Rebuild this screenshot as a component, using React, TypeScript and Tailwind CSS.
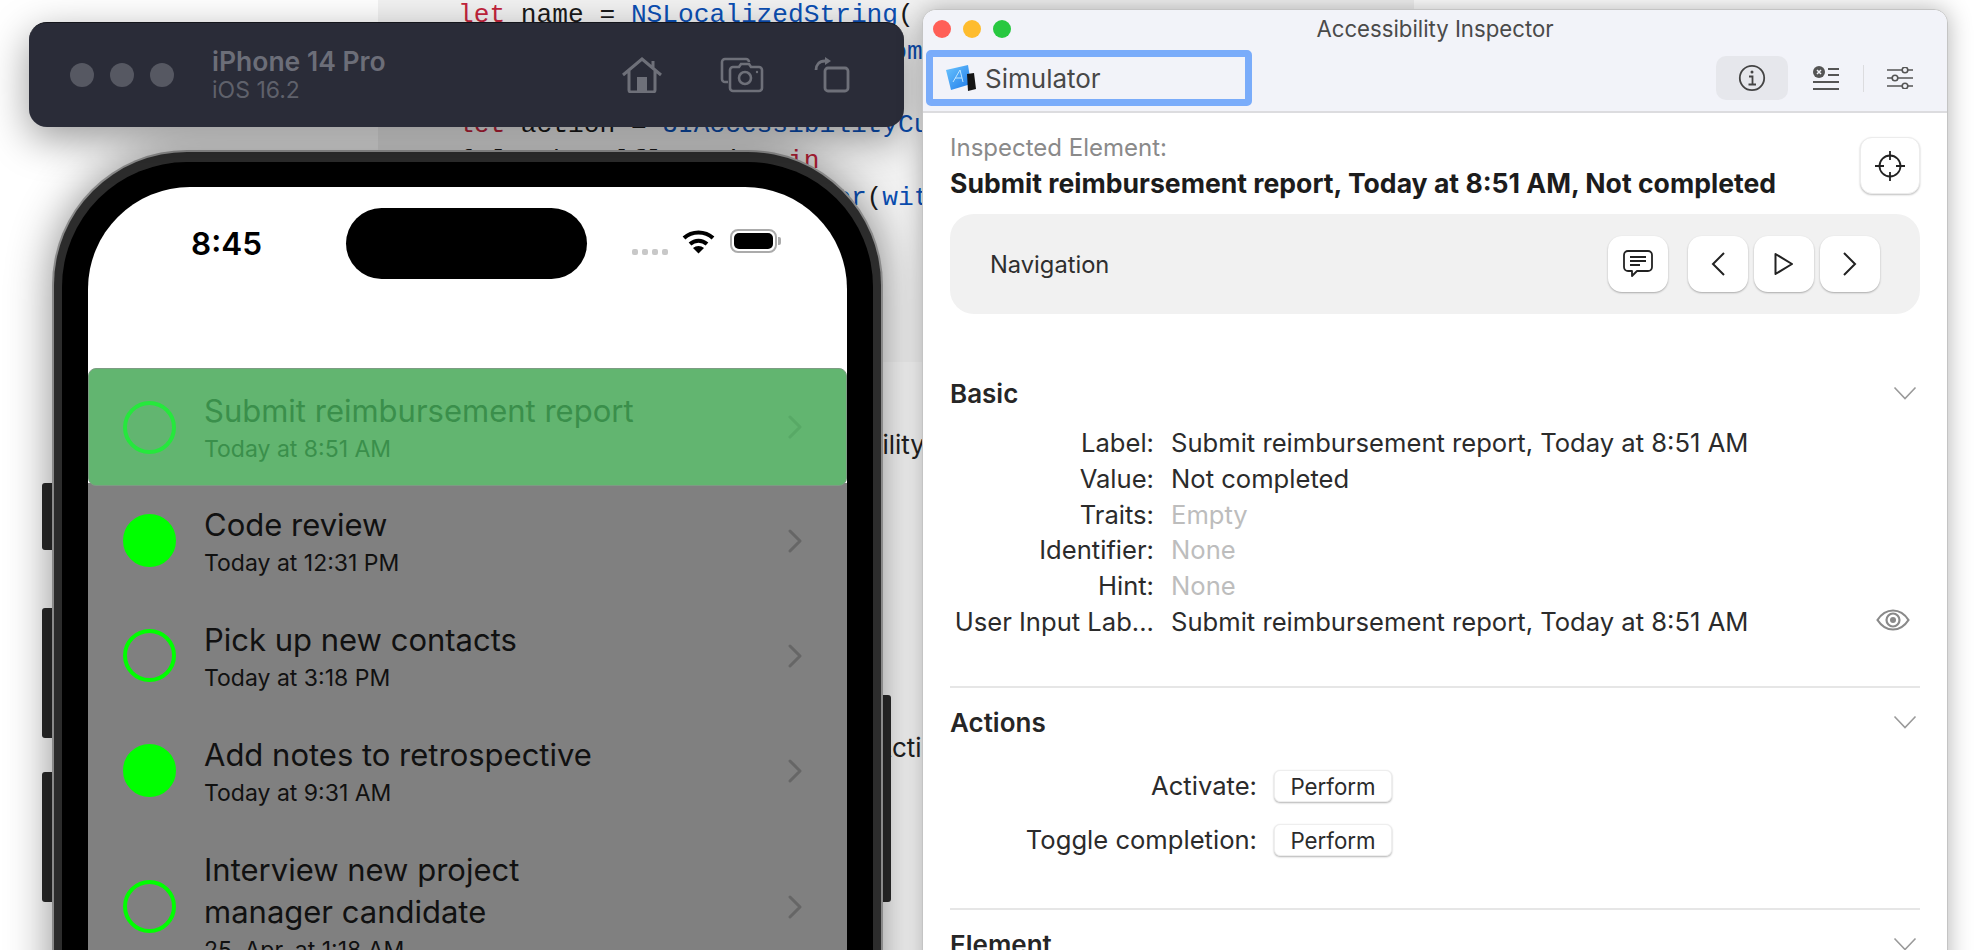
import React from "react";

const reminders = [
  { title: ["Code review"], when: "Today at 12:31 PM", done: true },
  { title: ["Pick up new contacts"], when: "Today at 3:18 PM", done: false },
  { title: ["Add notes to retrospective"], when: "Today at 9:31 AM", done: true },
  { title: ["Interview new project", "manager candidate"], when: "25. Apr. at 1:18 AM", done: false },
];

const basicRows = [
  { label: "Label:", value: "Submit reimbursement report, Today at 8:51 AM" },
  { label: "Value:", value: "Not completed" },
  { label: "Traits:", value: "Empty", muted: true },
  { label: "Identifier:", value: "None", muted: true },
  { label: "Hint:", value: "None", muted: true },
  { label: "User Input Lab...", value: "Submit reimbursement report, Today at 8:51 AM", eye: true },
];

const RowChevron = ({ className }: { className: string }) => (
  <svg width="16" height="24" viewBox="0 0 16 24" fill="none" className={className}>
    <path d="M3 2l10 10L3 22" stroke="currentColor" strokeWidth="3" strokeLinecap="round" strokeLinejoin="round" />
  </svg>
);

const SectionChevron = () => (
  <svg width="24" height="14" viewBox="0 0 24 14" fill="none" className="text-[#9a9a9a]">
    <path d="M1.5 1.5L12 12.5 22.5 1.5" stroke="currentColor" strokeWidth="1.6" />
  </svg>
);

const SectionHeader = ({ title }: { title: string }) => (
  <div className="flex h-[36px] items-center justify-between pr-[3px]">
    <span className="text-[26px] font-semibold text-[#262626]">{title}</span>
    <SectionChevron />
  </div>
);

const NavButton = ({ children }: { children: React.ReactNode }) => (
  <div className="flex h-[56px] w-[60px] items-center justify-center rounded-[14px] bg-white shadow-[0_1px_2px_rgba(0,0,0,0.3)]">
    {children}
  </div>
);

const SimulatorBar = () => (
  <div className="absolute left-[29px] top-[22px] z-20 flex h-[105px] w-[875px] items-center rounded-[18px] border-t border-[#15161c] bg-[#2a2c38] pl-[41px] shadow-[0_12px_40px_rgba(0,0,0,0.4)]">
    <div className="flex gap-[16px]">
      <div className="size-[24px] rounded-full bg-[#565862]" />
      <div className="size-[24px] rounded-full bg-[#565862]" />
      <div className="size-[24px] rounded-full bg-[#565862]" />
    </div>
    <div className="ml-[38px] flex w-[410px] flex-col">
      <span className="text-[26.5px] font-semibold leading-[30px] text-[#6c6e78]">iPhone 14 Pro</span>
      <span className="text-[23px] leading-[28px] text-[#5f616b]">iOS 16.2</span>
    </div>
    <div className="flex items-center text-[#6e7079]">
      <svg width="40" height="36" viewBox="0 0 40 36" fill="none" stroke="currentColor" strokeWidth="3">
        <path d="M1 18L20 2l19 16M31 4v7M7 14v19a2 2 0 0 0 2 2h22a2 2 0 0 0 2-2V14" />
        <rect x="15" y="20" width="10" height="15" fill="currentColor" stroke="none" />
      </svg>
      <svg width="44" height="36" viewBox="0 0 44 36" fill="none" stroke="currentColor" strokeWidth="2.6" className="ml-[58px]">
        <path d="M8 25H5a3 3 0 0 1-3-3V5a3 3 0 0 1 3-3h21a3 3 0 0 1 3 3" />
        <path d="M13 10h6l2-3h8l2 3h8a3 3 0 0 1 3 3v18a3 3 0 0 1-3 3H13a3 3 0 0 1-3-3V13a3 3 0 0 1 3-3z" />
        <circle cx="25" cy="21" r="6" />
        <circle cx="37" cy="15" r="1.2" fill="currentColor" stroke="none" />
      </svg>
      <svg width="36" height="36" viewBox="0 0 36 36" fill="none" stroke="currentColor" strokeWidth="2.8" className="ml-[50px]">
        <rect x="11" y="11" width="23" height="23" rx="3" />
        <path d="M2 13c0-5 3-9 9-9" />
        <path d="M11 0l6 4-6 4z" fill="currentColor" stroke="none" />
      </svg>
    </div>
  </div>
);

const StatusBar = () => (
  <div className="flex h-[92px] shrink-0 items-center pt-[21px]">
    <span className="ml-[103px] w-[155px] text-[31.5px] font-semibold leading-none text-black">8:45</span>
    <div className="h-[71px] w-[241px] rounded-[36px] bg-black" />
    <div className="ml-[45px] flex w-[151px] items-start">
      <div className="mt-[17px] flex gap-[4px]">
        <div className="size-[6px] rounded-[2px] bg-[#c8c8c8]" />
        <div className="size-[6px] rounded-[2px] bg-[#c8c8c8]" />
        <div className="size-[6px] rounded-[2px] bg-[#c8c8c8]" />
        <div className="size-[6px] rounded-[2px] bg-[#c8c8c8]" />
      </div>
      <svg width="33" height="24" viewBox="0 0 33 24" className="ml-[14px] -mt-[2px]" fill="none" stroke="black" strokeWidth="4">
        <path d="M2 8c8-7.5 21-7.5 29 0" />
        <path d="M8 14c5-4.500 12-4.500 17 0" />
        <path d="M16.500 23.500L11 18c3-2.800 8-2.800 11 0z" fill="black" stroke="none" />
      </svg>
      <div className="ml-[15px] -mt-[3px] flex items-center">
        <div className="h-[24px] w-[47px] rounded-[8px] border-2 border-[#ababab] p-[2px]">
          <div className="h-full w-full rounded-[5px] bg-black" />
        </div>
        <div className="ml-[1px] h-[8px] w-[3px] rounded-r-[2px] bg-[#ababab]" />
      </div>
    </div>
  </div>
);

const Phone = () => (
  <div className="absolute left-[42px] top-[150px] z-10 h-[900px] w-[849px]">
    {/* side buttons */}
    <div className="absolute left-0 top-[333px] h-[67px] w-[12px] rounded-l-[3px] bg-[#2a2a2a]" />
    <div className="absolute left-0 top-[458px] h-[130px] w-[12px] rounded-l-[3px] bg-[#2a2a2a]" />
    <div className="absolute left-0 top-[622px] h-[130px] w-[12px] rounded-l-[3px] bg-[#2a2a2a]" />
    <div className="absolute right-0 top-[545px] h-[207px] w-[12px] rounded-r-[3px] bg-[#2a2a2a]" />
    <div className="absolute left-[10px] top-0 h-[900px] w-[831px] rounded-t-[135px] border-2 border-b-0 border-[#8a8a8a] bg-[#2c2c2c] px-[8px] pt-[10px] shadow-[0_0_45px_rgba(0,0,0,0.45)]">
      <div className="h-full rounded-t-[125px] bg-black px-[26px] pt-[25px]">
        <div className="flex h-full flex-col overflow-hidden rounded-t-[102px] bg-white">
          <StatusBar />
          <div className="h-[89px] shrink-0" />
          <div className="relative z-10 -mb-[3px] flex h-[118px] shrink-0 items-center rounded-[8px] border border-[#7d9c83] bg-[#62b570] pl-[34px] pr-[43px] text-[#3a8f4b]">
            <div className="size-[53px] shrink-0 rounded-full border-[4px] border-[#25e83c]" />
            <div className="ml-[28px] -mt-[1px] flex-1">
              <div className="text-[31px] leading-[42px]">Submit reimbursement report</div>
              <div className="mt-[2px] text-[23px] leading-[30px]">Today at 8:51 AM</div>
            </div>
            <RowChevron className="text-[#58a966]" />
          </div>
          <div className="flex-1 bg-[#808080]">
            {reminders.map((r) => (
              <div
                key={r.when}
                className={`flex items-center pl-[35px] pr-[44px] text-[#111] ${r.title.length > 1 ? "h-[157px]" : "h-[115px]"}`}
              >
                <div className={`size-[53px] shrink-0 rounded-full border-[4px] border-[#00ff00] ${r.done ? "bg-[#00ff00]" : ""}`} />
                <div className="ml-[28px] flex-1">
                  {r.title.map((line) => (
                    <div key={line} className="text-[31px] leading-[42px]">{line}</div>
                  ))}
                  <div className="mt-[2px] text-[23px] leading-[30px]">{r.when}</div>
                </div>
                <RowChevron className="text-[#666666]" />
              </div>
            ))}
          </div>
        </div>
      </div>
    </div>
  </div>
);

const Inspector = () => (
  <div className="absolute left-[922px] top-[9px] z-30 h-[1000px] w-[1026px] overflow-hidden rounded-t-[14px] border border-[#c4c4c4] bg-white shadow-[0_0_24px_rgba(0,0,0,0.3)]">
    <div className="h-[103px] border-b-2 border-[#dcdcdf] bg-[#f2f3f9]">
      <div className="relative flex h-[38px] items-center justify-center">
        <div className="absolute left-[10px] top-[10px] flex gap-[12px]">
          <div className="size-[18px] rounded-full bg-[#ff5f57]" />
          <div className="size-[18px] rounded-full bg-[#febc2e]" />
          <div className="size-[18px] rounded-full bg-[#28c840]" />
        </div>
        <span className="text-[22.2px] text-[#4a4a4a]">Accessibility Inspector</span>
      </div>
      <div className="mt-[2px] flex items-center justify-between pl-[3px] pr-[34px]">
        <div className="flex h-[56px] w-[326px] items-center rounded-[5px] border-[7px] border-[#7aacfa] pl-[12px] text-[26px] text-[#484848]">
          <svg width="32" height="28" viewBox="0 0 32 28" className="shrink-0">
            <defs>
              <linearGradient id="sim" x1="0" y1="0" x2="1" y2="1">
                <stop offset="0" stopColor="#6cc6ff" />
                <stop offset="1" stopColor="#1c78e8" />
              </linearGradient>
            </defs>
            <path d="M1 6L23 1l3 19-20 6z" fill="url(#sim)" />
            <path d="M8 18L15 6l3 12M10 14h7" stroke="#bfe6ff" strokeWidth="1" fill="none" />
            <path d="M22 10l7-1 2 16-8 2z" fill="#151515" />
          </svg>
          <span className="ml-[8px]">Simulator</span>
        </div>
        <div className="flex items-center">
          <div className="flex h-[44px] w-[72px] items-center justify-center rounded-[10px] bg-[#e6e7ec]">
            <svg width="28" height="28" viewBox="0 0 28 28" fill="none" stroke="#444" strokeWidth="1.8">
              <circle cx="14" cy="14" r="12.200" />
              <path d="M11 12.500h3.500V20M10.500 20.500h7.500" />
              <circle cx="14" cy="8" r="1.500" fill="#444" stroke="none" />
            </svg>
          </div>
          <svg width="26" height="24" viewBox="0 0 26 24" fill="none" stroke="#555" strokeWidth="1.800" className="ml-[25px]">
            <circle cx="6" cy="6" r="6" fill="#555" stroke="none" />
            <path d="M4 4l4 4M8 4l-4 4" stroke="#f2f3f9" strokeWidth="1.500" />
            <path d="M15 3h11M15 9h11M0 16h26M0 23h26" />
          </svg>
          <div className="ml-[24px] h-[27px] w-px bg-[#dcdcdf]" />
          <svg width="26" height="22" viewBox="0 0 26 22" fill="none" stroke="#555" strokeWidth="1.600" className="ml-[23px]">
            <path d="M0 3h15M21 3h5M0 11h5M11 11h15M0 19h15M21 19h5" />
            <circle cx="18" cy="3" r="2.800" />
            <circle cx="8" cy="11" r="2.800" />
            <circle cx="18" cy="19" r="2.800" />
          </svg>
        </div>
      </div>
    </div>

    <div className="px-[27px] pt-[24px]">
      <div className="flex h-[77px] items-start justify-between">
        <div className="-mt-[4px]">
          <div className="text-[24px] leading-[30px] text-[#8a8a8a]">Inspected Element:</div>
          <div className="mt-[2px] text-[26.6px] font-bold leading-[36px] text-[#1c1c1c]">
            Submit reimbursement report, Today at 8:51 AM, Not completed
          </div>
        </div>
        <div className="flex h-[57px] w-[60px] items-center justify-center rounded-[12px] border border-[#ececec] bg-white shadow-[0_1px_2px_rgba(0,0,0,0.25)]">
          <svg width="32" height="32" viewBox="0 0 32 32" fill="none" stroke="#222" strokeWidth="1.800">
            <circle cx="16" cy="16" r="10.500" />
            <path d="M16 1v9M16 22v9M1 16h9M22 16h9" />
          </svg>
        </div>
      </div>

      <div className="flex h-[100px] items-center justify-between rounded-[24px] bg-[#f1f1f1] pl-[40px] pr-[40px]">
        <span className="pt-[2px] text-[23.7px] text-[#2e2e2e]">Navigation</span>
        <div className="flex items-center">
          <NavButton>
            <svg width="30" height="28" viewBox="0 0 30 28" fill="none" stroke="#222" strokeWidth="1.800" strokeLinejoin="round">
              <path d="M5 1h20a4 4 0 0 1 4 4v12a4 4 0 0 1-4 4H14l-5 5v-5H5a4 4 0 0 1-4-4V5a4 4 0 0 1 4-4z" />
              <path d="M7 7h16M7 11h16M7 15h10" />
            </svg>
          </NavButton>
          <div className="ml-[20px] flex gap-[6px]">
            <NavButton>
              <svg width="14" height="24" viewBox="0 0 14 24" fill="none" stroke="#222" strokeWidth="2"><path d="M13 1L2 12l11 11" /></svg>
            </NavButton>
            <NavButton>
              <svg width="20" height="24" viewBox="0 0 20 24" fill="none" stroke="#222" strokeWidth="2" strokeLinejoin="round"><path d="M1.500 2L18 12 1.500 22z" /></svg>
            </NavButton>
            <NavButton>
              <svg width="14" height="24" viewBox="0 0 14 24" fill="none" stroke="#222" strokeWidth="2"><path d="M1 1l11 11L1 23" /></svg>
            </NavButton>
          </div>
        </div>
      </div>

      <div className="mt-[61px]">
        <SectionHeader title="Basic" />
      </div>
      <div className="mt-[14px]">
        {basicRows.map((row) => (
          <div key={row.label} className="flex h-[35.9px] items-center text-[25.6px]">
            <span className="w-[204px] shrink-0 whitespace-nowrap text-right text-[#2b2b2b]">{row.label}</span>
            <span className={`ml-[17px] flex-1 ${row.muted ? "text-[#bdbdbd]" : "text-[#2b2b2b]"}`}>{row.value}</span>
            {row.eye && (
              <svg width="34" height="22" viewBox="0 0 34 22" fill="none" stroke="#8a8a8a" strokeWidth="2.200" className="mr-[10px] -mt-[4px]">
                <path d="M1.500 11C6 4 11 1.500 17 1.500S28 4 32.500 11C28 18 23 20.500 17 20.500S6 18 1.500 11z" />
                <circle cx="17" cy="11" r="6.500" />
                <circle cx="17" cy="11" r="3" fill="#8a8a8a" stroke="none" />
              </svg>
            )}
          </div>
        ))}
      </div>

      <div className="mt-[46px] h-[2px] bg-[#e6e6e6]" />
      <div className="mt-[16px]">
        <SectionHeader title="Actions" />
      </div>
      <div className="mt-[30px] flex flex-col gap-[22px]">
        {["Activate:", "Toggle completion:"].map((label) => (
          <div key={label} className="flex h-[32px] items-center">
            <span className="w-[307px] text-right text-[25.6px] text-[#2b2b2b]">{label}</span>
            <div className="ml-[17px] flex h-[32px] w-[118px] items-center justify-center rounded-[6px] border border-[#eeeeee] bg-white text-[22.3px] text-[#2b2b2b] shadow-[0_1px_2px_rgba(0,0,0,0.3)]">
              Perform
            </div>
          </div>
        ))}
      </div>

      <div className="mt-[52px] h-[2px] bg-[#e6e6e6]" />
      <div className="mt-[16px]">
        <SectionHeader title="Element" />
      </div>
    </div>
  </div>
);

const CodeEditor = () => (
  <>
    <div className="absolute left-[378px] top-0 h-[362px] w-[1036px] overflow-hidden bg-[#f2f2f2] pl-[80px] font-['Liberation_Mono',monospace] text-[26.2px] leading-[36.500px] text-[#1a1a1a]">
      <div className="-mt-[3px] whitespace-pre">
        <div><span className="text-[#c4243c]">let</span> name = <span className="text-[#0b4fb3]">NSLocalizedString</span>(</div>
        <div className="pl-[9px] text-[#0b4fb3]">{"                          comment"}</div>
        <div>{" "}</div>
        <div><span className="text-[#c4243c]">let</span> action = <span className="text-[#0b4fb3]">UIAccessibilityCustomAction</span>(</div>
        <div>{"{ [weak self] action "}<span className="text-[#c4243c]">in</span></div>
        <div>{"   self.delegate?."}<span className="text-[#0b4fb3]">reminder</span>(<span className="text-[#0b4fb3]">with</span></div>
      </div>
    </div>
    <div className="absolute left-[378px] top-[362px] h-[588px] w-[544px] overflow-hidden bg-[#f8f8f8] pt-[65px] text-[26px] leading-[36px] text-[#222]">
      <div className="ml-[392px] whitespace-nowrap">Accessibility</div>
      <div className="ml-[496px] mt-[267px] whitespace-nowrap">Actions</div>
    </div>
  </>
);

export default function App() {
  return (
    <div className="relative h-[950px] w-[1974px] overflow-hidden bg-white font-['Inter',sans-serif]">
      <CodeEditor />
      <SimulatorBar />
      <Phone />
      <Inspector />
    </div>
  );
}
